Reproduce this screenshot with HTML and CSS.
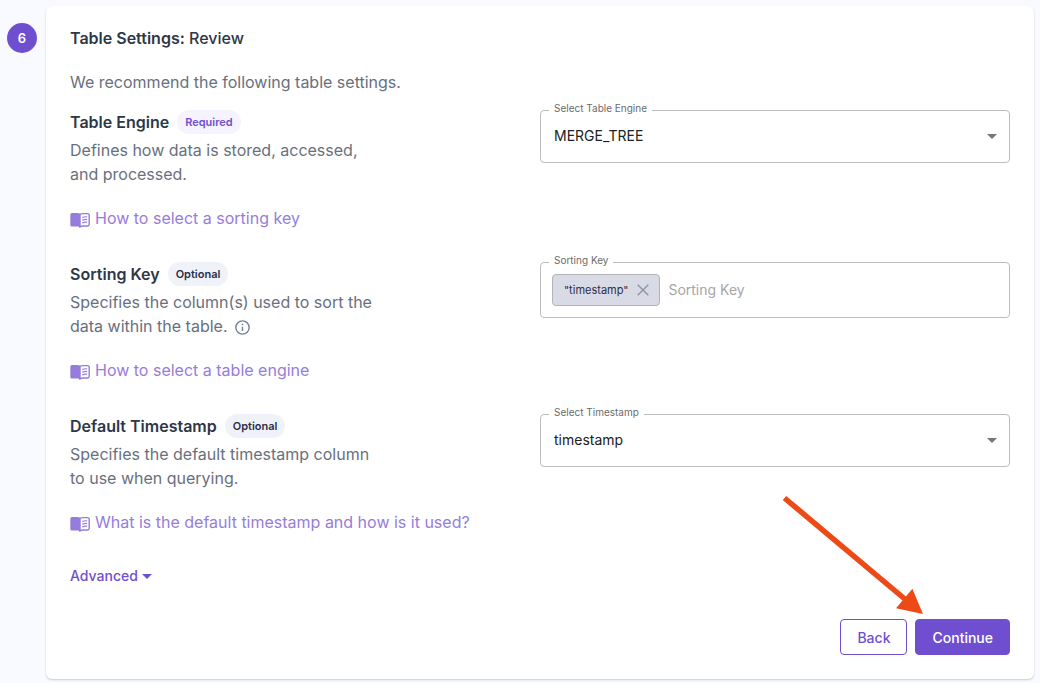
FILE: index.html
```html
<!DOCTYPE html>
<html lang="en">
  <head>
    <meta charset="UTF-8" />
    <meta name="viewport" content="width=device-width, initial-scale=1.0" />
    <title>Table Settings</title>
    <link rel="stylesheet" href="styles.css">
  </head>
  <body>
    <svg class="sprite" aria-hidden="true">
      <symbol id="icon-book" viewBox="0 0 20 16">
        <path d="M2 1h5.500q1.500 0 2.500.8V15.200Q9 14.600 7.500 14.600H2Q.3 14.600.3 12.900V2.700Q.3 1 2 1z" fill="currentColor" />
        <path d="M10 2.200Q11.200 1.600 13 1.600h4.500q1.700 0 1.700 1.500v9.500q0 1.400-1.700 1.400H13q-1.800 0-3 .8z" fill="none" stroke="currentColor" stroke-width="1.400" />
        <path d="M12.300 5.500q2.200-1 4.700-.7M12.300 8.200q2.200-1 4.700-.7M12.300 10.900q2.200-1 4.700-.7" fill="none" stroke="currentColor" stroke-width="1.200" />
      </symbol>
      <symbol id="icon-caret" viewBox="0 0 10 5">
        <path d="M0 0h10L5 5z" fill="currentColor" />
      </symbol>
    </svg>

    <main class="step">
      <div class="step-number">6</div>

      <form class="card">
        <h1 class="card-title"><strong>Table Settings:</strong> Review</h1>
        <p class="intro">We recommend the following table settings.</p>

        <section class="setting">
          <div class="setting-info">
            <h2 class="setting-title">Table Engine <span class="badge badge-required">Required</span></h2>
            <p class="setting-text">Defines how data is stored, accessed, and processed.</p>
            <a class="help-link" href="#">
              <svg class="book"><use href="#icon-book" /></svg>
              How to select a sorting key
            </a>
          </div>
          <div class="field">
            <label class="field-label" for="engine">Select Table Engine</label>
            <select class="field-select" id="engine">
              <option>MERGE_TREE</option>
            </select>
            <svg class="caret"><use href="#icon-caret" /></svg>
          </div>
        </section>

        <section class="setting">
          <div class="setting-info">
            <h2 class="setting-title">Sorting Key <span class="badge">Optional</span></h2>
            <p class="setting-text">
              Specifies the column(s) used to sort the data within the table.
              <svg class="info" viewBox="0 0 14 14">
                <circle cx="7" cy="7" r="6.200" fill="none" stroke="currentColor" stroke-width="1.300" />
                <path d="M7 6.200v4M7 3.500v1.300" stroke="currentColor" stroke-width="1.300" />
              </svg>
            </p>
            <a class="help-link" href="#">
              <svg class="book"><use href="#icon-book" /></svg>
              How to select a table engine
            </a>
          </div>
          <div class="field field-tags">
            <label class="field-label" for="sorting-key">Sorting Key</label>
            <span class="chip">
              "timestamp"
              <button class="chip-remove" type="button" aria-label="Remove">
                <svg class="cross" viewBox="0 0 12 12"><path d="M.7.7l10.600 10.600M11.300.7L.7 11.300" stroke="currentColor" stroke-width="1.500" /></svg>
              </button>
            </span>
            <input class="field-input" id="sorting-key" type="text" placeholder="Sorting Key" />
          </div>
        </section>

        <section class="setting">
          <div class="setting-info">
            <h2 class="setting-title">Default Timestamp <span class="badge">Optional</span></h2>
            <p class="setting-text">Specifies the default timestamp column to use when querying.</p>
            <a class="help-link" href="#">
              <svg class="book"><use href="#icon-book" /></svg>
              What is the default timestamp and how is it used?
            </a>
          </div>
          <div class="field">
            <label class="field-label" for="timestamp">Select Timestamp</label>
            <select class="field-select" id="timestamp">
              <option>timestamp</option>
            </select>
            <svg class="caret"><use href="#icon-caret" /></svg>
          </div>
        </section>

        <button class="advanced" type="button">
          Advanced
          <svg class="advanced-caret"><use href="#icon-caret" /></svg>
        </button>

        <div class="actions">
          <svg class="arrow" viewBox="0 0 142 119">
            <path d="M3.500 3L125 105" stroke="currentColor" stroke-width="5.500" />
            <path d="M142 119l-10.600-25.300-16.400 19.600z" fill="currentColor" />
          </svg>
          <button class="btn" type="button">Back</button>
          <button class="btn btn-primary" type="submit">Continue</button>
        </div>
      </form>
    </main>
  </body>
</html>
```
FILE: styles.css
```css
* {
  box-sizing: border-box;
}

body {
  margin: 0;
  background: #f9faff;
  color: #2d3748;
  font-family: Inter, "Liberation Sans", sans-serif;
  font-size: 16px;
  line-height: 24px;
}

button,
input,
select {
  font-family: inherit;
}

h1,
h2,
p {
  margin: 0;
}

.sprite {
  display: none;
}

.step {
  display: flex;
  align-items: flex-start;
  gap: 9px;
  padding: 6px 6px 4px 7px;
}

.step-number {
  flex: none;
  width: 30px;
  height: 30px;
  margin-top: 17px;
  border-radius: 50%;
  background: #6f4fcf;
  color: #fff;
  font-size: 13px;
  font-weight: 600;
  line-height: 30px;
  text-align: center;
}

.card {
  flex: 1;
  padding: 20px 24px 24px;
  border-radius: 6px;
  background: #fff;
  box-shadow: 0 1px 2px rgba(0, 0, 0, 0.2);
}

.card-title {
  font-size: 16px;
  font-weight: 500;
}

.card-title strong {
  font-weight: 600;
}

.intro {
  margin: 20px 0 16px;
  color: #68707e;
}

.setting {
  display: grid;
  grid-template-columns: 1fr 1fr;
  align-items: start;
  margin-bottom: 32px;
}

.setting-title {
  display: flex;
  align-items: center;
  gap: 8px;
  font-size: 16px;
  font-weight: 600;
}

.badge {
  padding: 0 8px;
  border-radius: 12px;
  background: #eff3f9;
  color: #2d2d48;
  font-size: 11px;
  font-weight: 600;
}

.badge-required {
  background: #f6f3fe;
  color: #6f4fcf;
}

.setting-text {
  max-width: 310px;
  margin: 4px 0 20px;
  color: #68707e;
}

.info {
  width: 15px;
  height: 15px;
  margin-left: 3px;
  color: #718096;
  vertical-align: -3px;
}

.help-link {
  display: flex;
  align-items: center;
  gap: 5px;
  color: #967ddb;
  text-decoration: none;
}

.book {
  width: 20px;
  height: 16px;
  margin-top: 3px;
}

.field {
  position: relative;
  display: flex;
  align-items: center;
  border: 1px solid #bdbdbd;
  border-radius: 4px;
}

.field-label {
  position: absolute;
  top: -10px;
  left: 8px;
  padding: 0 5px;
  background: #fff;
  color: #6b6b6b;
  font-size: 10px;
  line-height: 14px;
}

.field-select {
  flex: 1;
  height: 51px;
  padding: 0 32px 2px 13px;
  border: 0;
  background: transparent;
  color: #212121;
  font-size: 14px;
  appearance: none;
}

.caret {
  position: absolute;
  right: 12px;
  width: 10px;
  height: 5px;
  color: #757575;
  pointer-events: none;
}

.field-tags {
  gap: 8px;
  padding: 11px;
}

.chip {
  display: flex;
  align-items: center;
  gap: 9px;
  height: 32px;
  padding: 0 10px 0 11px;
  border: 1px solid #b3b3b8;
  border-radius: 4px;
  background: #d8dae6;
  color: #2d2d48;
  font-size: 11px;
}

.chip-remove {
  display: flex;
  padding: 0;
  border: 0;
  background: none;
  color: #95969f;
}

.cross {
  width: 12px;
  height: 12px;
}

.field-input {
  flex: 1;
  min-width: 0;
  padding: 0 0 2px;
  border: 0;
  outline: none;
  color: #212121;
  font-size: 14px;
}

.field-input::placeholder {
  color: #a6a6a6;
}

.advanced {
  display: flex;
  align-items: center;
  gap: 4px;
  padding: 0;
  border: 0;
  background: none;
  color: #6f4fcf;
  font-size: 14px;
  font-weight: 500;
  line-height: 20px;
}

.advanced-caret {
  width: 10px;
  height: 5px;
}

.actions {
  position: relative;
  display: flex;
  justify-content: flex-end;
  gap: 8px;
  margin-top: 33px;
}

.btn {
  height: 36px;
  padding: 0 16px;
  border: 1px solid #6f4fcf;
  border-radius: 4px;
  background: #fff;
  color: #6f4fcf;
  font-size: 14px;
  font-weight: 500;
}

.btn-primary {
  background: #6f4fcf;
  color: #fff;
}

/* callout pointing at the Continue button */
.arrow {
  position: absolute;
  right: 87px;
  bottom: 41px;
  width: 142px;
  height: 119px;
  color: #ee4a17;
  pointer-events: none;
}
```
